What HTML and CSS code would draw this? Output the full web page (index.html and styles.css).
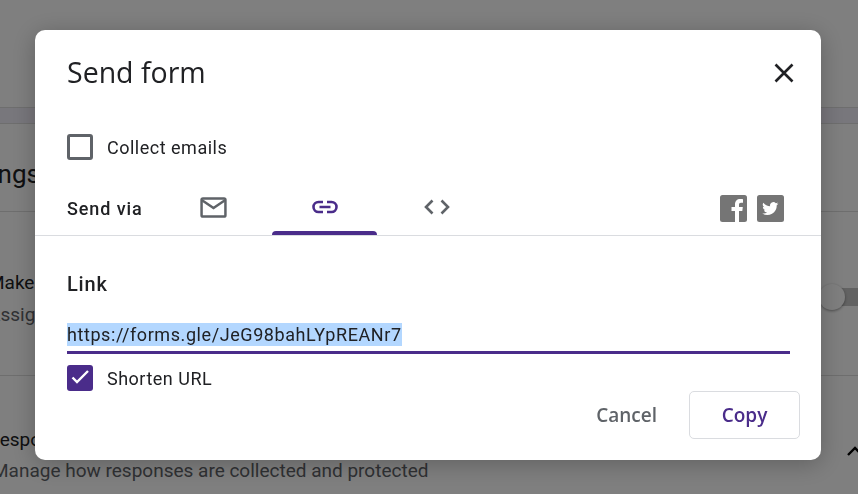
FILE: index.html

```html
<!DOCTYPE html>
<html lang="en">
<head>
    <meta charset="UTF-8">
    <meta name="viewport" content="width=device-width, initial-scale=1.0">
    <title>Send form</title>
    <link rel="stylesheet" href="styles.css">
</head>
<body>
    <!-- Settings page behind the dialog -->
    <div class="page">
        <div class="band"></div>
        <h2 class="page-title">Settings</h2>
        <section class="setting setting-quiz">
            <div class="setting-text">
                <h3>Make this a quiz</h3>
                <p>Assign point values, set answers</p>
            </div>
            <div class="toggle"><span class="toggle-knob"></span></div>
        </section>
        <section class="setting setting-resp">
            <div class="setting-text">
                <h3>Responses</h3>
                <p>Manage how responses are collected and protected</p>
            </div>
            <svg class="chevron" width="24" height="24" viewBox="0 0 24 24"><path d="M5 16l7-7 7 7" fill="none" stroke="#000" stroke-width="2.4"/></svg>
        </section>
    </div>
    <div class="overlay"></div>

    <!-- Dialog -->
    <div class="dialog">
        <header class="dialog-head">
            <h1>Send form</h1>
            <svg class="close" width="20" height="20" viewBox="0 0 20 20"><path d="M1.500 1.500l17 17M18.500 1.500l-17 17" fill="none" stroke="#202124" stroke-width="2.600"/></svg>
        </header>

        <label class="check-row collect">
            <span class="box"></span>
            <span>Collect emails</span>
        </label>

        <div class="send-via">
            <span class="send-label">Send via</span>
            <div class="tabs">
                <div class="tab">
                    <svg width="27" height="21" viewBox="0 0 28 22"><rect x="1.500" y="1.500" width="25" height="19" rx="1.500" fill="none" stroke="#5f6368" stroke-width="2.600"/><path d="M2 3.500l12 8 12-8" fill="none" stroke="#5f6368" stroke-width="2.600"/></svg>
                </div>
                <div class="tab active">
                    <svg width="28" height="14" viewBox="0 0 28 14"><path d="M12 2H7.500a5 5 0 0 0 0 10H12M16 2h4.500a5 5 0 0 1 0 10H16M8.500 7h11" fill="none" stroke="#4a2c8a" stroke-width="2.600"/></svg>
                </div>
                <div class="tab">
                    <svg width="28" height="16" viewBox="0 0 28 16"><path d="M9.500 1.500L3 8l6.500 6.500M18.500 1.500L25 8l-6.500 6.500" fill="none" stroke="#5f6368" stroke-width="2.600"/></svg>
                </div>
            </div>
            <div class="social">
                <svg width="27" height="27" viewBox="0 0 27 27"><rect width="27" height="27" rx="2.500" fill="#757575"/><path d="M15 27V16h-3.500v-4H15V9.500C15 6 17 4 20.200 4c1.300 0 2.300.1 2.800.2v3.600h-2c-1.500 0-2 .8-2 2V12h3.800l-.5 4H19v11z" fill="#fff"/></svg>
                <svg width="27" height="27" viewBox="0 0 27 27"><rect width="27" height="27" rx="2.500" fill="#757575"/><path transform="translate(2.500 2.500) scale(.82)" d="M23 7.600c-.7.300-1.500.5-2.300.6.800-.5 1.500-1.300 1.800-2.200-.8.500-1.700.8-2.600 1a4 4 0 0 0-6.900 3.700A11.500 11.500 0 0 1 4.700 6.400a4 4 0 0 0 1.200 5.400c-.6 0-1.300-.2-1.800-.5 0 2 1.400 3.700 3.200 4-.6.200-1.200.2-1.800.1.500 1.600 2 2.800 3.800 2.800A8 8 0 0 1 3.400 19.400 11.400 11.400 0 0 0 21 9.300c.8-.5 1.500-1 2-1.700z" fill="#fff"/></svg>
            </div>
        </div>

        <div class="link-panel">
            <h3>Link</h3>
            <div class="url-field"><span class="url-selected">https://forms.gle/JeG98bahLYpREANr7</span></div>
            <label class="check-row shorten">
                <span class="box checked">
                    <svg width="26" height="26" viewBox="0 0 26 26"><path d="M5.500 12.500l4.500 4.500L21 6" fill="none" stroke="#fff" stroke-width="2.400"/></svg>
                </span>
                <span>Shorten URL</span>
            </label>
            <div class="actions">
                <button class="btn btn-cancel" type="button">Cancel</button>
                <button class="btn btn-copy" type="button">Copy</button>
            </div>
        </div>
    </div>
</body>
</html>
```

FILE: styles.css

```css
body, h1, h2, h3, p {
    margin: 0;
    padding: 0;
}

body {
    font-family: Roboto, sans-serif;
    color: #202124;
    background: #fff;
    height: 494px;
    overflow: hidden;
}

/* Page behind the dialog */
.page {
    height: 494px;
    overflow: hidden;
}

.band {
    height: 15px;
    margin-top: 107px;
    background: #f1eef8;
    border-top: 1px solid #ddd;
    border-bottom: 1px solid #ddd;
}

.page-title {
    height: 87px;
    margin-left: -55px;
    line-height: 100px;
    font-size: 26px;
    font-weight: 400;
    border-bottom: 1px solid #ddd;
}

.setting {
    display: flex;
    justify-content: space-between;
    margin-left: -10px;
}

.setting h3 {
    font-size: 19px;
    font-weight: 400;
    margin-left: -2px;
}

.setting p {
    font-size: 19px;
    color: #5f6368;
}

.setting-quiz {
    height: 164px;
    padding-top: 59px;
    box-sizing: border-box;
    border-bottom: 1px solid #ddd;
}

.setting-quiz p {
    margin-top: 9px;
    margin-left: -2px;
}

.toggle {
    width: 40px;
    height: 18px;
    margin-top: 17px;
    background: #c4c4c4;
    border-radius: 9px;
    position: relative;
    margin-right: -10px;
}

.toggle-knob {
    position: absolute;
    left: -9px;
    top: -4px;
    width: 26px;
    height: 26px;
    border-radius: 50%;
    background: #fff;
    box-shadow: 0 1px 3px rgba(0, 0, 0, 0.4);
}

.setting-resp {
    padding-top: 52px;
}

.setting-resp p {
    margin-top: 8px;
    margin-left: 2px;
}

.chevron {
    margin-top: 11px;
    margin-right: -9px;
}

.overlay {
    position: fixed;
    inset: 0;
    background: rgba(0, 0, 0, 0.5);
}

/* Dialog */
.dialog {
    position: fixed;
    left: 35px;
    top: 30px;
    width: 786px;
    height: 430px;
    background: #fff;
    border-radius: 10px;
    box-shadow: 0 4px 24px rgba(0, 0, 0, 0.25);
    display: flex;
    flex-direction: column;
}

.dialog-head {
    display: flex;
    justify-content: space-between;
    align-items: center;
    height: 86px;
    padding: 0 27px 0 32px;
}

.dialog-head h1 {
    font-family: "Open Sans", sans-serif;
    font-size: 28.5px;
    font-weight: 400;
    margin-top: -3px;
}

.close {
    margin-top: -1px;
}

.check-row {
    display: flex;
    align-items: center;
    gap: 14px;
    font-size: 18px;
}

.box {
    width: 26px;
    height: 26px;
    box-sizing: border-box;
    border: 3px solid #5f6368;
    border-radius: 3px;
}

.box.checked {
    border: 0;
    background: #4a2c8a;
}

.box.checked svg {
    display: block;
}

.collect {
    margin: 18px 32px 0;
    letter-spacing: 0.5px;
}

/* Send via row */
.send-via {
    display: flex;
    align-items: stretch;
    height: 50px;
    margin-top: 26px;
    padding: 0 37px 0 32px;
    box-sizing: border-box;
    border-bottom: 1px solid #dadce0;
}

.send-label {
    width: 94px;
    padding-top: 12px;
    font-size: 18px;
    font-weight: 500;
    letter-spacing: 0.9px;
}

.tabs {
    display: flex;
    gap: 6px;
}

.tab {
    width: 105px;
    box-sizing: border-box;
    display: flex;
    flex-direction: column;
    align-items: center;
    justify-content: center;
    padding-bottom: 7px;
}

.tab:last-child svg {
    margin-left: 2px;
}

.tab.active {
    justify-content: space-between;
    padding: 14px 0 0;
}

.tab.active::after {
    content: "";
    align-self: stretch;
    height: 4px;
    background: #4a2c8a;
    border-radius: 4px 4px 0 0;
}

.social {
    display: flex;
    gap: 10px;
    margin-left: auto;
    padding-top: 9px;
}

/* Link panel */
.link-panel {
    padding: 36px 31px 0 32px;
}

.link-panel h3 {
    font-size: 20px;
    font-weight: 500;
    letter-spacing: 0.8px;
    line-height: 24px;
}

.url-field {
    margin-top: 27px;
    height: 28px;
    border-bottom: 3px solid #4a2c8a;
    font-size: 18px;
    letter-spacing: 0.58px;
    line-height: 23px;
}

.url-selected {
    display: inline-block;
    background: #b3d7ff;
}

.shorten {
    margin-top: 11px;
    letter-spacing: 0.5px;
}

.actions {
    display: flex;
    justify-content: flex-end;
    align-items: center;
    gap: 32px;
    margin: 0 -10px 0 0;
}

.btn {
    font-family: "Open Sans", sans-serif;
    font-size: 19px;
    font-weight: 600;
    background: #fff;
    border: 0;
    padding: 0;
}

.btn-cancel {
    color: #5f6368;
}

.btn-copy {
    width: 111px;
    height: 48px;
    color: #4a2c8a;
    border: 1px solid #dadce0;
    border-radius: 5px;
}
```
